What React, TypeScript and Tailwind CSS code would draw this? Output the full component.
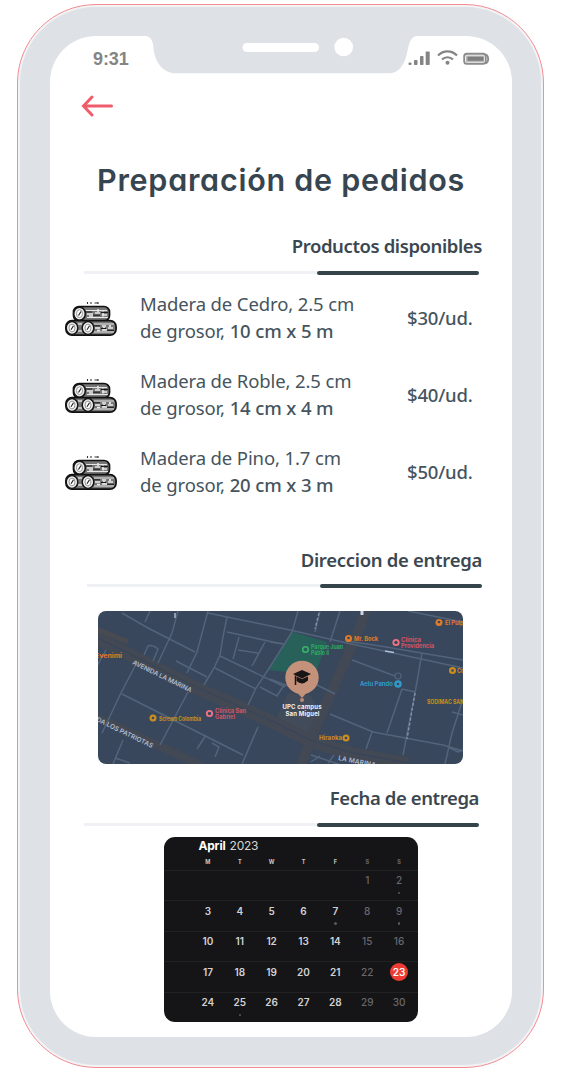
import React from "react";

const products = [
  { first: "Madera de Cedro, 2.5 cm", lead: "de grosor, ", size: "10 cm x 5 m", price: "$30/ud." },
  { first: "Madera de Roble, 2.5 cm", lead: "de grosor, ", size: "14 cm x 4 m", price: "$40/ud." },
  { first: "Madera de Pino, 1.7 cm", lead: "de grosor, ", size: "20 cm x 3 m", price: "$50/ud." },
];

const weekdays = ["M", "T", "W", "T", "F", "S", "S"];
const weeks: (number | null)[][] = [
  [null, null, null, null, null, 1, 2],
  [3, 4, 5, 6, 7, 8, 9],
  [10, 11, 12, 13, 14, 15, 16],
  [17, 18, 19, 20, 21, 22, 23],
  [24, 25, 26, 27, 28, 29, 30],
];
const marked = [2, 7, 9, 25];

function Notch() {
  return (
    <svg className="absolute top-0 left-[94px] h-[38px] w-[276px]" viewBox="144 36 276 38" fill="none">
      <path d="M144 35.500C150 36 153 40 153.500 48C154.500 62 163 73.300 176 73.300H389C398 73.300 403.500 66 406 57C409 47 408.500 36.500 418 35.500Z" fill="#dee1e6" />
      <rect x="242.500" y="43" width="76.500" height="9" rx="4.500" fill="#fff" />
      <circle cx="343.700" cy="47" r="9.300" fill="#fff" />
    </svg>
  );
}

function StatusIcons() {
  return (
    <svg className="mb-[2px] h-[16px] w-[82px]" viewBox="408 50 82 16" fill="none">
      <g fill="#858585">
        <rect x="408.500" y="62.500" width="3" height="2.500" rx="1" />
        <rect x="414" y="60" width="3.500" height="5" rx=".8" />
        <rect x="420" y="56" width="3.500" height="9" rx=".8" />
        <rect x="425.700" y="51.500" width="4" height="13.500" rx=".8" />
        <circle cx="447.500" cy="62.800" r="2" />
      </g>
      <path d="M438 55.500C443.500 50 451.500 50 457 55.500M442 59.500C445 56.500 450 56.500 453 59.500" stroke="#858585" strokeWidth="2.200" />
      <rect x="464.200" y="53.800" width="21.500" height="10" rx="2.600" stroke="#8b8b8b" strokeWidth="1.900" />
      <rect x="466" y="55.500" width="18" height="6.600" fill="#b9b9b9" />
      <rect x="467.500" y="56.800" width="16" height="4" rx=".6" fill="#7e7e7e" />
      <path d="M486 54.300C489 57 489 61 486 63.500" stroke="#8b8b8b" strokeWidth="1.900" />
    </svg>
  );
}

function Logs() {
  return (
    <svg className="h-[34px] w-[52px] shrink-0" viewBox="0 0 52 34" fill="none">
      <path d="M22.500 0v2M26 0v2M29.500 1h4M33 0v2" stroke="#333" strokeWidth="1.100" />
      <rect x="8.500" y="4.500" width="36" height="14.500" rx="5.500" fill="#777" stroke="#111" strokeWidth="1.700" />
      <path d="M21 8.500h21M22 15.500h21" stroke="#e7e7e7" strokeWidth="1" />
      <path d="M22 12h6M30 11h5M37 13h5M24 14h4M33 7v3M38 9.500v5" stroke="#e7e7e7" strokeWidth="1.600" />
      <path d="M20 10h7M28 13.200h7M36 10.500h7" stroke="#181818" strokeWidth="1" />
      <ellipse cx="14.500" cy="11.700" rx="5.800" ry="6.600" fill="#eee" stroke="#151515" strokeWidth="1.600" />
      <ellipse cx="14.500" cy="11.700" rx="3" ry="3.900" fill="#fff" stroke="#888" strokeWidth=".9" />
      <path d="M13.500 13.500l2.500-4" stroke="#222" strokeWidth="1.200" />
      <rect x=".9" y="18.700" width="50.200" height="14.400" rx="6" fill="#777" stroke="#111" strokeWidth="1.700" />
      <path d="M29 22h20M29 30h20" stroke="#e7e7e7" strokeWidth="1" />
      <path d="M30 26h5M37 24h4M43 26h5M32 28.500h3M37 28h5M45 23v2M39 25v3" stroke="#eee" strokeWidth="1.700" />
      <path d="M28 23.800h7M36 26.500h5M42 28.300h7" stroke="#151515" strokeWidth="1" />
      <path d="M13 22h4M13 29h4" stroke="#ddd" strokeWidth="1.500" />
      <ellipse cx="7" cy="26" rx="5.800" ry="6.500" fill="#eee" stroke="#151515" strokeWidth="1.500" />
      <ellipse cx="7" cy="26" rx="3" ry="3.900" fill="#fff" stroke="#888" strokeWidth=".9" />
      <path d="M6 27.800l2.500-4" stroke="#222" strokeWidth="1.200" />
      <ellipse cx="23" cy="26" rx="5.800" ry="6.500" fill="#eee" stroke="#151515" strokeWidth="1.500" />
      <ellipse cx="23" cy="26" rx="3" ry="3.900" fill="#fff" stroke="#888" strokeWidth=".9" />
      <path d="M22 27.800l2.500-4" stroke="#222" strokeWidth="1.200" />
    </svg>
  );
}

function SectionHeader({ title, className, ruleClass, textClass }: { title: string; className: string; ruleClass: string; textClass: string }) {
  return (
    <div className={className}>
      <h2 className={"flex h-[30px] items-center justify-end whitespace-nowrap pb-[2px] font-['Noto_Sans'] text-[18.5px] font-semibold text-[#3b4851] " + textClass}>
        {title}
      </h2>
      <div className={"flex h-[3.5px] w-[395px] items-center " + ruleClass}>
        <div className="h-[3px] flex-1 bg-[#f0f1f4]" />
        <div className="h-[3.5px] w-[162px] rounded-full bg-[#35434b]" />
      </div>
    </div>
  );
}

function DeliveryMap() {
  return (
    <svg className="ml-[48px] mt-[23.5px] h-[153px] w-[365px] shrink-0 rounded-[8px]" viewBox="0 0 365 153" fill="none" fontFamily="Inter, sans-serif">
      <rect width="365" height="153" fill="#38475b" />
      <path d="M195 21L229 31L217 64L170 59Z" fill="#28605a" />
      <path d="M190 82L212 84L222 100L214 124L178 108Z" fill="#424b59" />
      <g stroke="#424954">
        <path d="M-2 27L96 76L172 110L212 130L255 143L310 153" strokeWidth="13" />
        <path d="M-2 106L55 132L104 155" strokeWidth="8" />
        <path d="M268 -2L262 16L242 62L215 122L203 155" strokeWidth="10" />
      </g>
      <path d="M-2 26L96 75L172 109L212 129L255 142L310 152" stroke="#38455a" strokeWidth="1.300" />
      <path d="M-2 18L30 31" stroke="#4a4b52" strokeWidth="5" />
      <g stroke="#52647c" strokeWidth="1.500">
        <path d="M24 2L50 17L97 41M52 0L47 11M80 0L74 22L60 52M110 0L99 41L89 62M110 2L192 19L249 32L365 57M129 6L125 26L122 44L116 57L106 74" />
        <path d="M129 21L184 33M141 26L135 48M167 31L154 55M140 39L160 42M122 45L187 76M117 57L158 78M194 21L170 59L158 77L150 94M162 76L179 85L186 74M78 50L109 66M46 44L50 35Q54 33 60 38L55 50" />
        <path d="M39 51L22 84L4 122M24 83L145 144M90 81L62 134M8 39L-1 55M160 116L144 153M108 124L99 138M114 132L121 136L117 146M25 129L15 153M17 147L32 152" />
        <path d="M172 31L187 33M200 0L194 21M222 0L217 21M242 0L232 31M254 49L297 65M232 103L275 121L345 134L365 140M304 78L289 122M304 78L317 81M324 42L317 82L305 144M365 88L354 122L347 153M274 121L268 138M310 0L365 11M172 68L190 75M217 73L237 83M249 30L282 35L365 49M354 101L365 104M350 136L360 141L365 139M222 145L213 151M236 144L230 152M213 144L243 154" />
        <circle cx="300" cy="65" r="3" strokeWidth="1.200" />
        <path d="M77 2V7" stroke="#a8b5cb" strokeWidth="1.600" />
        <path d="M264 0V4" stroke="#cbd6e5" strokeWidth="3" />
        <path d="M287 40L296 41.500" stroke="#afc0d3" strokeWidth="1.500" />
        <path d="M317 82L309 128M221 2L217 18" stroke="#8395ae" strokeWidth="1.400" strokeDasharray="3 2" />
      </g>
      <g fill="#aebdd4" fontSize="6.500" fontWeight="600">
        <text x="34" y="53" transform="rotate(26 34 53)" textLength="65">AVENIDA LA MARINA</text>
        <text x="-2" y="110" transform="rotate(26 -2 110)" textLength="62">DA LOS PATRIOTAS</text>
        <text x="240" y="149" transform="rotate(11 240 149)" textLength="38">LA MARINA</text>
      </g>
      <g fontSize="5.500" fontWeight="700">
        <g fill="#e27b2a">
          <text x="-3" y="47" textLength="27" lengthAdjust="spacingAndGlyphs">Evenimi</text>
          <circle cx="250.500" cy="27.500" r="3.500" /><text x="256" y="30" textLength="24" lengthAdjust="spacingAndGlyphs">Mr. Bock</text>
          <circle cx="341" cy="11.500" r="3.500" /><text x="347" y="14" textLength="22" lengthAdjust="spacingAndGlyphs">El Pulpo</text>
        </g>
        <g fill="#cc8d20">
          <circle cx="55" cy="107" r="3.500" /><text x="61" y="109.500" textLength="42" lengthAdjust="spacingAndGlyphs">Scream Colombia</text>
          <text x="221" y="129" textLength="23" lengthAdjust="spacingAndGlyphs">Hiraoka</text><circle cx="248" cy="127" r="3.500" />
          <circle cx="354.500" cy="59.500" r="3.500" /><text x="359" y="62">Co</text>
          <text x="329" y="93" textLength="37" lengthAdjust="spacingAndGlyphs">SODIMAC SAN</text>
        </g>
        <g fill="#d25566">
          <circle cx="111.500" cy="102.500" r="2.700" stroke="#f07482" strokeWidth="1.800" fill="#38475b" />
          <text x="117" y="101.500" textLength="31" lengthAdjust="spacingAndGlyphs">Clínica San</text><text x="117" y="108" textLength="20" lengthAdjust="spacingAndGlyphs">Gabriel</text>
          <circle cx="298" cy="31.500" r="2.700" stroke="#f07482" strokeWidth="1.800" fill="#38475b" />
          <text x="303" y="31" textLength="20" lengthAdjust="spacingAndGlyphs">Clínica</text><text x="303" y="37" textLength="33" lengthAdjust="spacingAndGlyphs">Providencia</text>
        </g>
        <g fill="#2fa961">
          <circle cx="207.500" cy="38.500" r="2.800" stroke="#3bb469" strokeWidth="1.500" fill="#28605a" />
          <text x="213" y="38" textLength="32" lengthAdjust="spacingAndGlyphs">Parque Juan</text><text x="213" y="44" textLength="18" lengthAdjust="spacingAndGlyphs">Pablo II</text>
        </g>
        <g fill="#3199c8">
          <text x="262" y="75" textLength="33" lengthAdjust="spacingAndGlyphs">Aelu Pando</text><circle cx="300" cy="73" r="3.800" />
        </g>
      </g>
      <g fill="#38475b">
        <circle cx="250.500" cy="27" r="1.300" /><circle cx="341" cy="11" r="1.300" /><circle cx="55" cy="107" r="1.300" /><circle cx="248" cy="127" r="1.300" /><circle cx="300" cy="73" r="1.300" /><circle cx="354.500" cy="59.500" r="1.300" />
      </g>
      <path d="M197 79L204 87L211 79Z" fill="#c4917a" />
      <circle cx="204" cy="66.500" r="16.700" fill="#c4917a" />
      <circle cx="204" cy="89" r="2" fill="#b98976" />
      <path d="M195 63L204 59L213 63L204 67.500Z" fill="#171516" />
      <path d="M198.500 65.500L204 68L210 65.500V69.500Q204 75 198.500 70Z" fill="#171516" />
      <path d="M197.500 64.500V74" stroke="#171516" strokeWidth="1.500" />
      <g fill="#f1f3f6" fontSize="6" fontWeight="700" textAnchor="middle">
        <text x="204" y="98" textLength="39">UPC campus</text>
        <text x="204.500" y="104.500" textLength="34">San Miguel</text>
      </g>
    </svg>
  );
}

function Day({ day, weekend }: { day: number | null; weekend: boolean }) {
  const today = day === 23;
  return (
    <div className="flex flex-col items-center pt-[0.5px]">
      <span
        className={
          "flex h-[18px] w-[18px] items-center justify-center rounded-full text-[10px] leading-none " +
          (today ? "bg-[#ee3c34] font-semibold text-white" : weekend ? "font-medium text-[#69686d]" : "font-semibold text-[#d2d2d4]")
        }
      >
        {day}
      </span>
      {day !== null && marked.includes(day) && <span className="mt-[2.5px] h-[2.5px] w-[2.5px] rounded-full bg-[#58585c]" />}
    </div>
  );
}

function Calendar() {
  return (
    <div className="ml-[114px] mt-[10.5px] flex h-[185px] w-[254px] shrink-0 flex-col overflow-hidden rounded-[11px] bg-[#151517] font-['Inter',sans-serif]">
      <div className="flex h-[18px] items-center pl-[34.5px] text-[12px] leading-none tracking-[-0.2px] text-[#d5d5d7]">
        <span className="mr-[4px] font-bold text-white">April</span>2023
      </div>
      <div className="grid h-[15px] grid-cols-7 items-center pl-[28px] pr-[3px] text-center text-[5.5px] font-bold text-[#c9c9ca]">
        {weekdays.map((d, i) => (
          <span key={i} className={i > 4 ? "text-[#69686d]" : ""}>{d}</span>
        ))}
      </div>
      {weeks.map((week, i) => (
        <div key={i} className="grid h-[30.5px] shrink-0 grid-cols-7 border-t border-[#222225] pl-[28px] pr-[3px]">
          {week.map((day, j) => (
            <Day key={j} day={day} weekend={j > 4} />
          ))}
        </div>
      ))}
    </div>
  );
}

export default function App() {
  return (
    <div className="flex h-[1080px] w-[568px] items-start overflow-hidden bg-white pl-[17px] pt-[4px]">
      <div className="h-[1064px] w-[527px] rounded-[79px] border border-[#f58c95] bg-[#f1f3f5] p-[2px]">
        <div className="h-[1058px] w-[521px] rounded-[76px] bg-[#dee1e6] pl-[30px] pt-[29px]">
          <main className="relative flex h-[1001px] w-[462px] flex-col rounded-[46px] bg-white">
            <Notch />
            <div className="flex h-[46px] shrink-0 items-center justify-between pl-[43px] pr-[22px]">
              <span className="font-['Liberation_Sans',sans-serif] text-[18px] font-bold tracking-[-0.1px] text-[#848484]">9:31</span>
              <StatusIcons />
            </div>
            <div className="flex h-[46px] shrink-0 items-center pl-[31px] pt-[2px]">
              <svg className="h-[22px] w-[32px]" viewBox="0 0 32 22" fill="none" stroke="#ef5d6c" strokeWidth="3">
                <path d="M30.500 11H3M11 2L2.500 11L11 20" strokeLinecap="round" />
              </svg>
            </div>
            <h1 className="flex h-[104px] shrink-0 items-center justify-center whitespace-nowrap font-['Inter',sans-serif] text-[30.5px] font-semibold tracking-[0.75px] text-[#36454f] [font-feature-settings:'cv11']">
              Preparación de pedidos
            </h1>
            <SectionHeader title="Productos disponibles" className="" textClass="pr-[30px] tracking-[-0.4px]" ruleClass="mt-[9px] ml-[34px]" />
            <div className="mt-[16.5px] flex flex-col gap-[22px]">
              {products.map((p) => (
                <div key={p.first} className="flex h-[55px] items-center pl-[15px]">
                  <Logs />
                  <p className="ml-[23px] w-[267px] whitespace-nowrap pb-[3px] font-['Noto_Sans'] text-[18.5px] leading-[27.5px] tracking-[-0.12px] text-[#46545d]">
                    {p.first}
                    <br />
                    {p.lead}
                    <span className="font-medium">{p.size}</span>
                  </p>
                  <span className="whitespace-nowrap pb-[1px] font-['Noto_Sans'] text-[18.5px] font-medium tracking-[-0.2px] text-[#46545d]">{p.price}</span>
                </div>
              ))}
            </div>
            <SectionHeader title="Direccion de entrega" className="mt-[46px]" textClass="pr-[30px] tracking-[-0.3px]" ruleClass="mt-[8px] ml-[37px]" />
            <DeliveryMap />
            <SectionHeader title="Fecha de entrega" className="mt-[20px]" textClass="pr-[33px] tracking-[-0.4px]" ruleClass="mt-[9px] ml-[34px]" />
            <Calendar />
          </main>
        </div>
      </div>
    </div>
  );
}
